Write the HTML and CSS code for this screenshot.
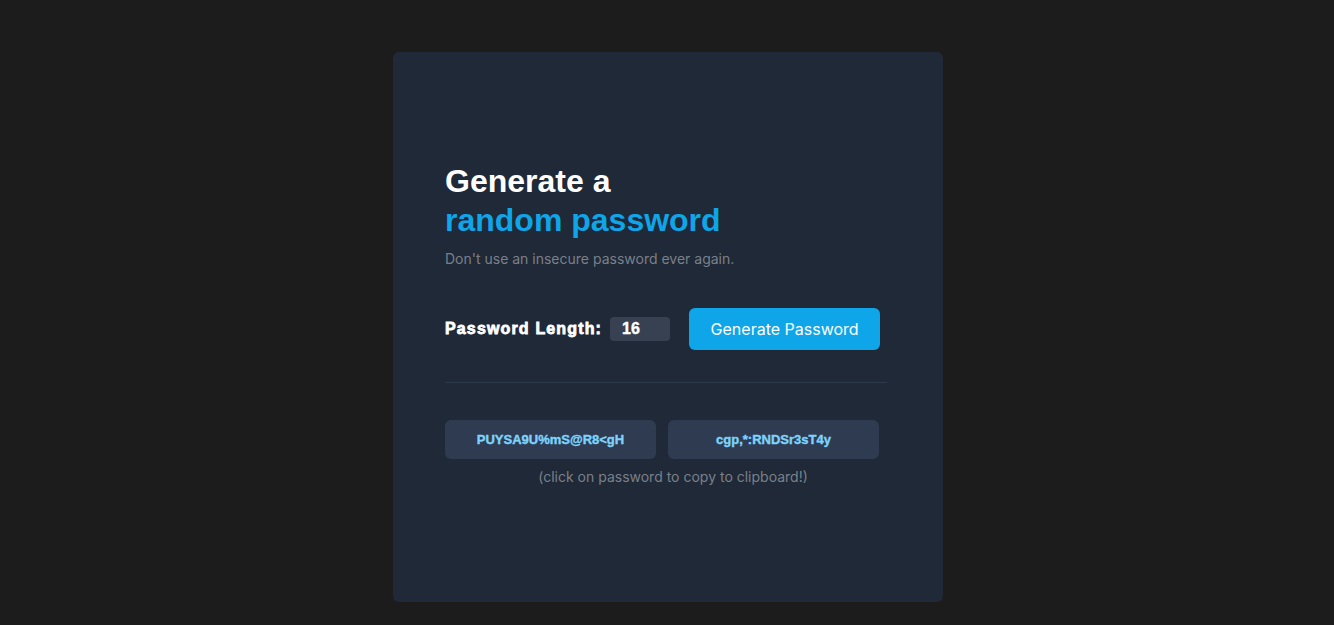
FILE: index.html
```html
<!DOCTYPE html>
<html>
<head>
<meta charset="utf-8">
<link rel="stylesheet" href="styles.css">
</head>
<body>
<main class="card">
  <div class="content">
    <h1 class="title">Generate a<br><span class="accent">random password</span></h1>
    <p class="subtitle">Don't use an insecure password ever again.</p>
    <div class="controls">
      <label class="length-label">Password Length:</label>
      <input class="length-input" type="text" value="16">
      <button class="generate">Generate Password</button>
    </div>
    <hr class="divider">
    <div class="passwords">
      <div class="pw">PUYSA9U%mS@R8&lt;gH</div>
      <div class="pw">cgp,*:RNDSr3sT4y</div>
    </div>
    <p class="hint">(click on password to copy to clipboard!)</p>
  </div>
</main>
</body>
</html>
```
FILE: styles.css
```css
html, body { margin: 0; padding: 0; }
body {
  background: #1c1c1c;
  height: 625px;
  font-family: Inter, "Noto Sans", sans-serif;
}
.card {
  position: absolute;
  left: 393px;
  top: 52px;
  width: 550px;
  height: 550px;
  box-sizing: border-box;
  background: #1f2937;
  border-radius: 6px;
  padding: 110px 56px 0 52px;
}
.title {
  margin: 0;
  font-family: "Liberation Sans", Arial, sans-serif;
  font-weight: 700;
  font-size: 32px;
  line-height: 39px;
  color: #ffffff;
}
.accent { color: #0ea5e9; }
.subtitle {
  margin: 10px 0 0;
  font-size: 14px;
  color: #7a808a;
}
.controls {
  display: flex;
  align-items: center;
  margin-top: 41px;
}
.length-label {
  font-family: "Liberation Sans", Arial, sans-serif;
  font-weight: 700;
  font-size: 16px;
  color: #fff;
  letter-spacing: 1.15px;
  -webkit-text-stroke: 0.8px #fff;
}
.length-input {
  margin-left: 8px;
  width: 60px;
  height: 24px;
  box-sizing: border-box;
  border: none;
  border-radius: 4px;
  background: #374151;
  color: #fff;
  font-family: "Liberation Sans", Arial, sans-serif;
  font-weight: 700;
  font-size: 16px;
  padding: 0 0 0 12px;
  outline: none;
  -webkit-text-stroke: 0.4px #fff;
}
.generate {
  margin-left: 19px;
  width: 191px;
  height: 42px;
  border: none;
  border-radius: 6px;
  background: #0ea5e9;
  color: #fff;
  font-family: Inter, sans-serif;
  font-size: 16px;
}
.divider {
  margin: 32px 0 0;
  border: none;
  border-top: 1px solid #2e3a4c;
  width: 442px;
}
.passwords {
  display: flex;
  gap: 12px;
  margin-top: 37px;
}
.pw {
  width: 211px;
  height: 39px;
  border-radius: 6px;
  background: #2f3b51;
  color: #7dd3fc;
  font-family: "Liberation Sans", Arial, sans-serif;
  font-weight: 700;
  font-size: 13px;
  -webkit-text-stroke: 0.4px #7dd3fc;
  display: flex;
  align-items: center;
  justify-content: center;
}
.hint {
  margin: 9px 0 0;
  width: 456px;
  text-align: center;
  font-size: 14px;
  color: #7a808a;
}
```
